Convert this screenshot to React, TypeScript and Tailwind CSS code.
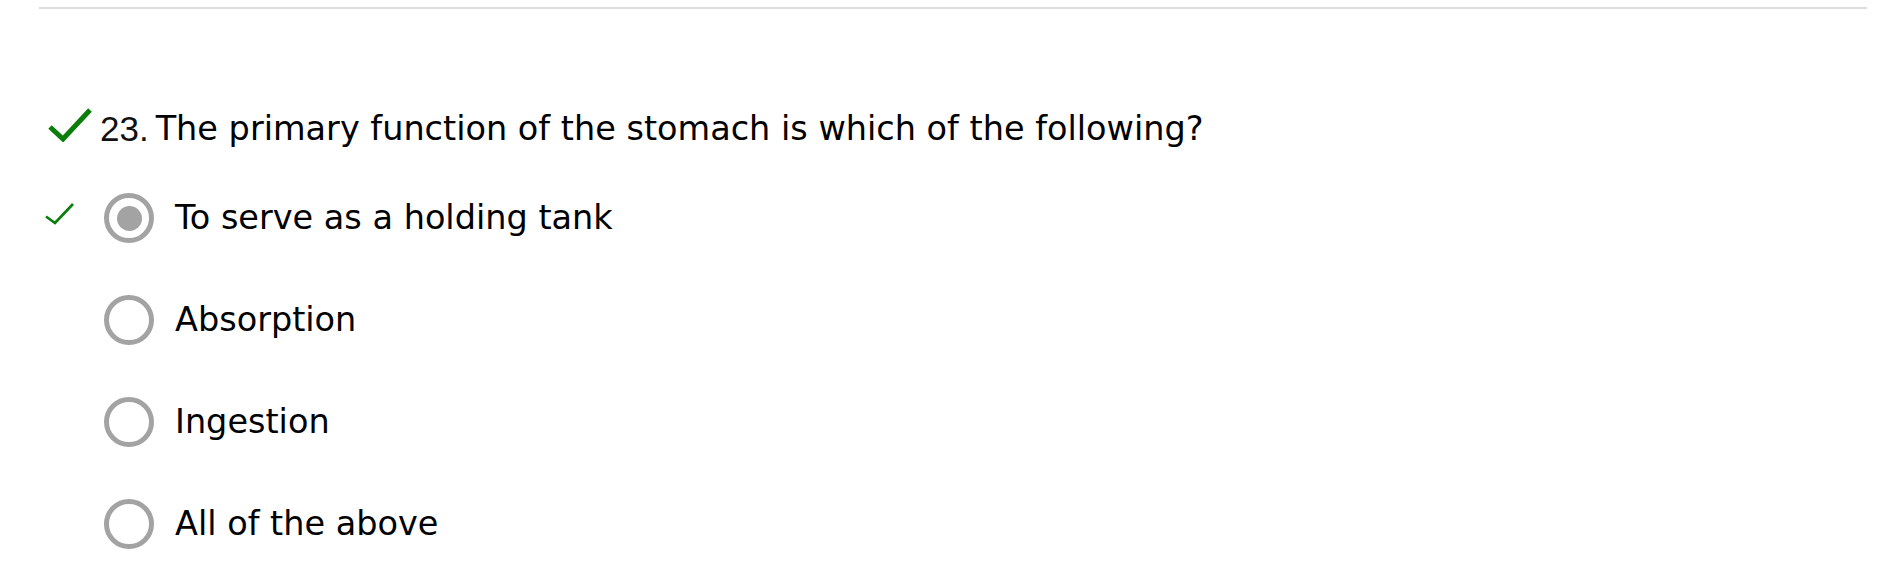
import React from "react";

interface Option {
  label: string;
  selected: boolean;
  correct: boolean;
}

const options: Option[] = [
  { label: "To serve as a holding tank", selected: true, correct: true },
  { label: "Absorption", selected: false, correct: false },
  { label: "Ingestion", selected: false, correct: false },
  { label: "All of the above", selected: false, correct: false },
];

function BigCheck() {
  return (
    <svg width="44" height="34" viewBox="0 0 44 34" className="shrink-0 -mt-[1px]">
      <polyline
        points="2,19 15,31 42,2"
        fill="none"
        stroke="#0a7d0a"
        strokeWidth="5"
        strokeLinejoin="miter"
      />
    </svg>
  );
}

function SmallCheck() {
  return (
    <svg width="29" height="22" viewBox="0 0 29 22" className="ml-[6px] mb-[9px]">
      <polyline
        points="1,13.5 10,20 28,1"
        fill="none"
        stroke="#0a7d0a"
        strokeWidth="2.6"
      />
    </svg>
  );
}

function Radio({ selected }: { selected: boolean }) {
  return (
    <span className="w-[50px] h-[50px] shrink-0 rounded-full border-[5px] border-[#a3a3a3] flex items-center justify-center">
      {selected && <span className="w-[25px] h-[25px] rounded-full bg-[#a3a3a3]" />}
    </span>
  );
}

export default function App() {
  return (
    <div className="w-full h-[570px] bg-white pt-[7px] overflow-hidden">
      {/* divider */}
      <div className="h-[2px] bg-[#dedede] ml-[39px] mr-[23px]" />

      <div className="pl-[39px] mt-[100px]">
        {/* question */}
        <div className="flex items-start h-[40px] pl-[9px]">
          <BigCheck />
          <span className="ml-[8px] font-['Liberation_Sans',Arial,sans-serif] text-[35px] leading-[40px] text-[#111]">
            23.
          </span>
          <span className="ml-[7px] font-['DejaVu_Sans',Verdana,sans-serif] text-[33.5px] leading-[40px] text-black whitespace-nowrap">
            The primary function of the stomach is which of the following?
          </span>
        </div>

        {/* answers */}
        <div className="flex flex-col gap-[52px] mt-[44px]">
          {options.map((opt) => (
            <label key={opt.label} className="flex items-center h-[50px]">
              <span className="w-[65px] flex items-center">
                {opt.correct && <SmallCheck />}
              </span>
              <Radio selected={opt.selected} />
              <span className="ml-[21px] font-['DejaVu_Sans',Verdana,sans-serif] text-[33.5px] leading-[40px] text-black whitespace-nowrap">
                {opt.label}
              </span>
            </label>
          ))}
        </div>
      </div>
    </div>
  );
}
